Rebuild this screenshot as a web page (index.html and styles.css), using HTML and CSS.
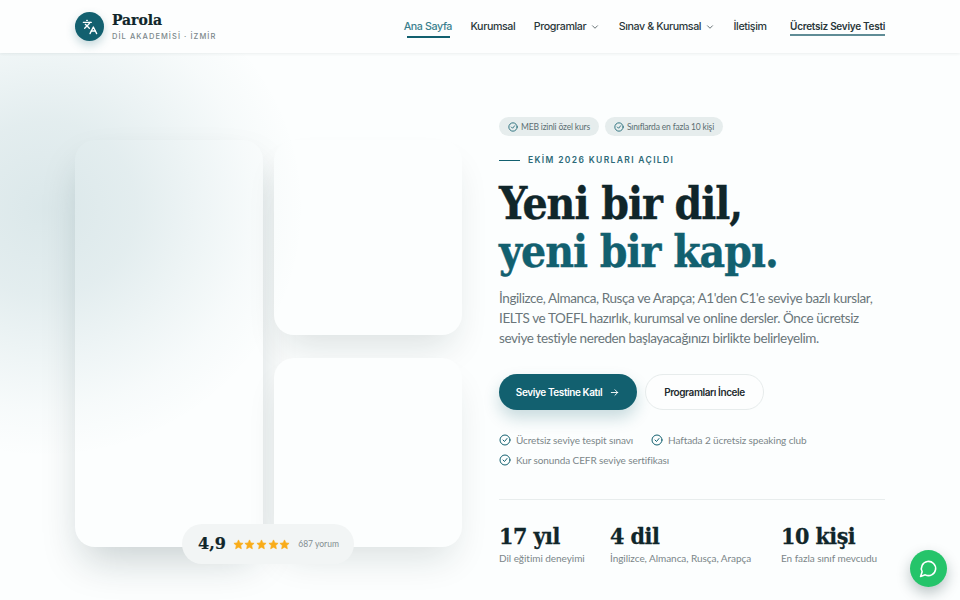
FILE: index.html
```html
<!DOCTYPE html>
<html lang="tr">
<head>
<meta charset="utf-8">
<title>Parola Dil Akademisi</title>
<link rel="stylesheet" href="styles.css">
</head>
<body>
<header class="topbar">
  <a class="brand" href="#">
    <span class="brand-mark">
      <svg width="16" height="16" viewBox="0 0 24 24" fill="none" stroke="#fff" stroke-width="2" stroke-linecap="round" stroke-linejoin="round"><path d="m5 8 6 6"/><path d="m4 14 6-6 2-3"/><path d="M2 5h12"/><path d="M7 2h1"/><path d="m22 22-5-10-5 10"/><path d="M14 18h6"/></svg>
    </span>
    <span class="brand-text">
      <span class="brand-name">Parola</span>
      <span class="brand-sub">DİL AKADEMİSİ · İZMİR</span>
    </span>
  </a>
  <nav class="nav">
    <a class="nav-link active" href="#">Ana Sayfa</a>
    <a class="nav-link" href="#">Kurumsal</a>
    <a class="nav-link" href="#">Programlar <svg class="chev" viewBox="0 0 24 24"><path d="m6 9 6 6 6-6"/></svg></a>
    <a class="nav-link" href="#">Sınav &amp; Kurumsal <svg class="chev" viewBox="0 0 24 24"><path d="m6 9 6 6 6-6"/></svg></a>
    <a class="nav-link" href="#">İletişim</a>
    <a class="nav-cta" href="#">Ücretsiz Seviye Testi</a>
  </nav>
</header>

<main class="hero">
  <div class="glow"></div>
  <div class="gallery">
    <div class="photo photo-tall"></div>
    <div class="photo photo-top"></div>
    <div class="photo photo-bottom"></div>
    <div class="rating">
      <span class="rating-num">4,9</span>
      <span class="stars">
        <svg viewBox="0 0 24 24"><path d="M12 2l3 6.6 7 .8-5.2 4.8 1.4 7.1L12 17.8l-6.2 3.5 1.4-7.1L2 9.4l7-.8z"/></svg>
        <svg viewBox="0 0 24 24"><path d="M12 2l3 6.6 7 .8-5.2 4.8 1.4 7.1L12 17.8l-6.2 3.5 1.4-7.1L2 9.4l7-.8z"/></svg>
        <svg viewBox="0 0 24 24"><path d="M12 2l3 6.6 7 .8-5.2 4.8 1.4 7.1L12 17.8l-6.2 3.5 1.4-7.1L2 9.4l7-.8z"/></svg>
        <svg viewBox="0 0 24 24"><path d="M12 2l3 6.6 7 .8-5.2 4.8 1.4 7.1L12 17.8l-6.2 3.5 1.4-7.1L2 9.4l7-.8z"/></svg>
        <svg viewBox="0 0 24 24"><path d="M12 2l3 6.6 7 .8-5.2 4.8 1.4 7.1L12 17.8l-6.2 3.5 1.4-7.1L2 9.4l7-.8z"/></svg>
      </span>
      <span class="rating-count">687 yorum</span>
    </div>
  </div>

  <section class="copy">
    <div class="pills">
      <span class="pill"><svg class="check" viewBox="0 0 24 24"><circle cx="12" cy="12" r="10"/><path d="m8 12 3 3 5-6"/></svg>MEB izinli özel kurs</span>
      <span class="pill"><svg class="check" viewBox="0 0 24 24"><circle cx="12" cy="12" r="10"/><path d="m8 12 3 3 5-6"/></svg>Sınıflarda en fazla 10 kişi</span>
    </div>
    <div class="eyebrow"><span class="eyebrow-line"></span>EKİM 2026 KURLARI AÇILDI</div>
    <h1 class="title">Yeni bir dil,<br><em>yeni bir kapı.</em></h1>
    <p class="lead">İngilizce, Almanca, Rusça ve Arapça; A1'den C1'e seviye bazlı kurslar, IELTS ve TOEFL hazırlık, kurumsal ve online dersler. Önce ücretsiz seviye testiyle nereden başlayacağınızı birlikte belirleyelim.</p>
    <div class="actions">
      <a class="btn btn-primary" href="#">Seviye Testine Katıl
        <svg viewBox="0 0 24 24"><path d="M5 12h14"/><path d="m13 6 6 6-6 6"/></svg>
      </a>
      <a class="btn btn-ghost" href="#">Programları İncele</a>
    </div>
    <ul class="feats">
      <li><svg class="check" viewBox="0 0 24 24"><circle cx="12" cy="12" r="10"/><path d="m8 12 3 3 5-6"/></svg>Ücretsiz seviye tespit sınavı</li>
      <li><svg class="check" viewBox="0 0 24 24"><circle cx="12" cy="12" r="10"/><path d="m8 12 3 3 5-6"/></svg>Haftada 2 ücretsiz speaking club</li>
      <li><svg class="check" viewBox="0 0 24 24"><circle cx="12" cy="12" r="10"/><path d="m8 12 3 3 5-6"/></svg>Kur sonunda CEFR seviye sertifikası</li>
    </ul>
    <div class="stats">
      <div class="stat"><div class="stat-num">17 yıl</div><div class="stat-label">Dil eğitimi deneyimi</div></div>
      <div class="stat"><div class="stat-num">4 dil</div><div class="stat-label">İngilizce, Almanca, Rusça, Arapça</div></div>
      <div class="stat"><div class="stat-num">10 kişi</div><div class="stat-label">En fazla sınıf mevcudu</div></div>
    </div>
  </section>
</main>

<a class="chat" href="#" aria-label="WhatsApp">
  <svg viewBox="0 0 24 24"><path d="M7.9 20A9 9 0 1 0 4 16.1L2 22z"/></svg>
</a>
</body>
</html>
```
FILE: styles.css
```css
* { box-sizing: border-box; }
html, body { margin: 0; height: 600px; overflow: hidden; }
body {
  background: #fcfefe;
  color: #0f2a2e;
  font-family: "Lato", "Liberation Sans", sans-serif;
  position: relative;
}
a { color: inherit; text-decoration: none; }

.topbar {
  height: 53px;
  padding: 0 75px;
  display: flex;
  align-items: center;
  justify-content: space-between;
  background: #fdfefe;
  box-shadow: 0 1px 3px rgba(15, 42, 46, .07);
  position: relative;
  z-index: 3;
}
.brand { display: flex; align-items: center; gap: 8px; }
.brand-mark {
  width: 29px; height: 29px; border-radius: 50%;
  background: #12606f;
  display: flex; align-items: center; justify-content: center;
  box-shadow: 0 4px 10px rgba(18, 96, 111, .25);
}
.brand-text { display: flex; flex-direction: column; }
.brand-name {
  font: 700 15.5px/18px "DejaVu Serif", serif;
  font-stretch: condensed;
  -webkit-text-stroke: .2px #10262a;
  color: #10262a;
}
.brand-sub {
  font: 500 7.5px/11px "Inter", sans-serif;
  letter-spacing: 1.06px;
  color: #7b878a;
  margin-top: 1.5px;
}
.nav { display: flex; align-items: center; gap: 18.5px; font: 500 10.7px/14px "Inter", sans-serif; letter-spacing: -.4px; color: #2a373a; }
.nav-link { display: flex; align-items: center; gap: 4px; padding: 5px 0; position: relative; }
.nav-link.active { color: #3a7f8d; }
.nav-link.active::after {
  content: ""; position: absolute; left: 3px; right: 2px; bottom: 1px; height: 1.5px; background: #12606f;
}
.chev { width: 10px; height: 10px; fill: none; stroke: #4a585b; stroke-width: 2; stroke-linecap: round; stroke-linejoin: round; }
.nav-cta {
  font-weight: 600; font-size: 10px; padding-bottom: 1px; margin-left: 5px; border-bottom: 2px solid #5f8c96; letter-spacing: -.28px; margin-top: 1px;
}

.hero {
  display: grid;
  grid-template-columns: 387px 386px;
  column-gap: 37px;
  padding: 0 75px;
  position: relative;
  height: 547px;
}
.glow {
  position: absolute; left: -215px; top: -95px; width: 520px; height: 500px;
  background: radial-gradient(closest-side, rgba(18, 96, 111, .14), rgba(18, 96, 111, .105) 35%, rgba(18, 96, 111, .06) 60%, rgba(18, 96, 111, .022) 80%, rgba(18, 96, 111, 0));
  pointer-events: none;
  z-index: 2;
}
.gallery {
  position: relative;
  display: grid;
  grid-template-columns: 1fr 1fr;
  grid-template-rows: 195px 189px;
  column-gap: 11px;
  row-gap: 23px;
  margin-top: 87px;
  height: 407px;
}
.photo { background: #fcfefe; border-radius: 20px; box-shadow: 0 20px 36px -10px rgba(15, 42, 46, .14); }
.photo-tall { grid-row: 1 / 3; box-shadow: 0 20px 40px -8px rgba(15, 42, 46, .22); }
.rating {
  position: absolute; left: 107px; top: 384px;
  width: 172px; height: 40px;
  border-radius: 20px;
  background: #f2f5f5;
  display: flex; align-items: center; padding: 0 16px;
  z-index: 2;
}
.rating-num { font: 700 16px/1 "DejaVu Serif", serif; -webkit-text-stroke: .2px #10262a; color: #10262a; margin-right: 7px; }
.stars { display: flex; gap: .6px; margin-right: 8px; }
.stars svg { width: 11px; height: 11px; fill: #f9ac19; stroke: #f9ac19; stroke-width: 1.5; stroke-linejoin: round; }
.rating-count { font-size: 8.5px; color: #838e91; white-space: nowrap; }

.copy { padding-top: 64px; min-width: 0; }
.pills { display: flex; gap: 6px; }
.pill {
  display: inline-flex; align-items: center; gap: 3px;
  height: 19px; padding: 0 9px;
  border-radius: 10px;
  background: #e6eded;
  color: #5b6e72;
  font-size: 8.5px;
  letter-spacing: -.17px;
}
.check { width: 12px; height: 12px; fill: none; stroke: #12606f; stroke-width: 2; stroke-linecap: round; stroke-linejoin: round; flex: none; }
.pill .check { width: 10px; height: 10px; }
.eyebrow {
  display: flex; align-items: center; gap: 8px;
  margin-top: 18px;
  font: 600 8.5px/12px "Inter", sans-serif; letter-spacing: 1.35px;
  color: #2c6a78;
}
.eyebrow-line { width: 21px; height: 1px; background: #12606f; }
.title {
  margin: 14px 0 0;
  font: 700 44px/48px "DejaVu Serif", serif;
  font-stretch: condensed;
  -webkit-text-stroke: .4px currentColor;
  letter-spacing: -1px;
  color: #10262a;
}
.title em { font-style: normal; color: #12606f; }
.lead {
  margin: 12px 0 0;
  font-size: 13.5px; line-height: 20px; color: #6a767a;
  letter-spacing: -.4px;
}
.actions { display: flex; gap: 8px; margin-top: 26px; }
.btn {
  height: 36px; border-radius: 18px;
  display: inline-flex; align-items: center; justify-content: center; gap: 7px;
  font: 600 10px/14px "Inter", sans-serif; letter-spacing: -.4px;
}
.btn svg { width: 11px; height: 11px; fill: none; stroke: currentColor; stroke-width: 2; stroke-linecap: round; stroke-linejoin: round; }
.btn-primary { width: 138px; background: #12606f; color: #fff; box-shadow: 0 8px 16px rgba(18, 96, 111, .22); }
.btn-ghost { width: 119px; background: #fdfefe; border: 1px solid #e7ecec; color: #1e2b2e; }
.feats {
  list-style: none; margin: 24px 0 0; padding: 0;
  display: flex; flex-wrap: wrap; gap: 8px 18px;
  font-size: 10px; color: #7b8689; letter-spacing: -.1px;
  line-height: 12px;
}
.feats li { display: flex; align-items: center; gap: 5px; }
.stats {
  margin-top: 33px; padding-top: 22px;
  border-top: 1px solid #e8eded;
  display: grid; grid-template-columns: 111px 171px auto;
}
.stat-num { font: 700 23px/28px "DejaVu Serif", serif; font-stretch: condensed; -webkit-text-stroke: .3px currentColor; color: #10262a; letter-spacing: -.5px; }
.stat-label { font-size: 10px; line-height: 14px; color: #7b8689; margin-top: 1px; white-space: nowrap; letter-spacing: -.05px; }

.chat {
  position: fixed; right: 13px; bottom: 13px;
  width: 37px; height: 37px; border-radius: 50%;
  background: #25c46a;
  display: flex; align-items: center; justify-content: center;
  box-shadow: 0 6px 14px rgba(15, 42, 46, .28);
  z-index: 4;
}
.chat svg { width: 19px; height: 19px; fill: none; stroke: #fff; stroke-width: 2; stroke-linejoin: round; stroke-linecap: round; }
```
